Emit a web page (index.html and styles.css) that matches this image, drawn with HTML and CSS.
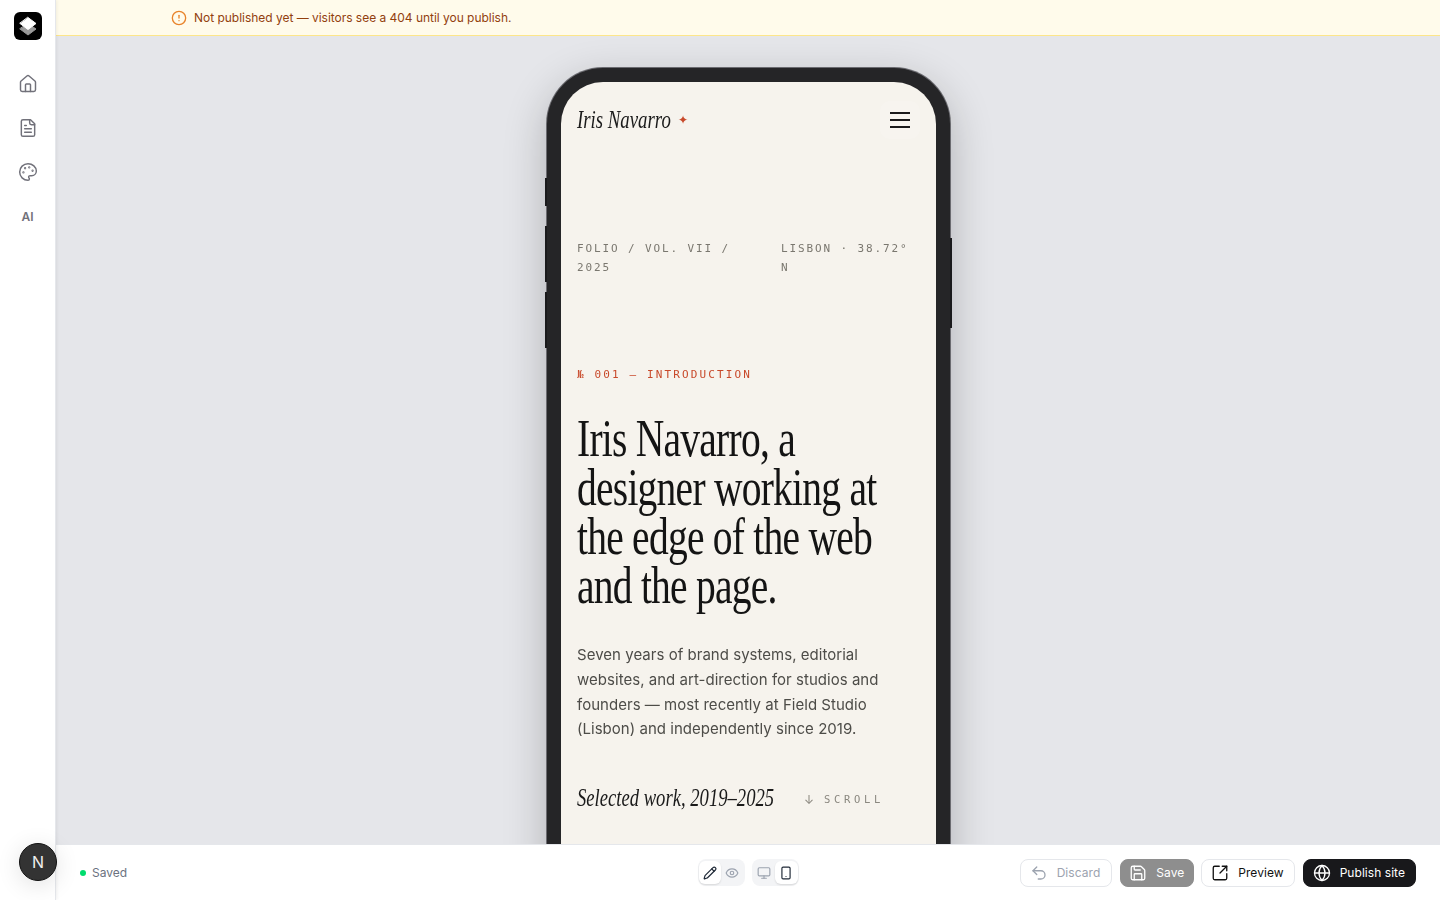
FILE: index.html
```html
<!DOCTYPE html>
<html lang="en">
<head>
    <meta charset="UTF-8">
    <meta name="viewport" content="width=device-width, initial-scale=1.0">
    <title>Site editor</title>
    <link rel="stylesheet" href="styles.css">
</head>
<body>

    <div class="app">
        <aside class="sidebar">
            <div class="logo">
                <svg viewBox="0 0 20 20" width="20" height="20">
                    <path d="M10 7.5 18 13l-8 6-8-6z" fill="#9a9a9a" stroke="#9a9a9a"/>
                    <path d="M10 1.5 18 7.5l-8 6-8-6z" fill="#fff" stroke="#fff"/>
                </svg>
            </div>
            <nav class="side-nav">
                <a class="side-link"><svg class="icon-20" viewBox="0 0 24 24"><path d="M15 21v-8a1 1 0 0 0-1-1h-4a1 1 0 0 0-1 1v8"/><path d="M3 10a2 2 0 0 1 .709-1.528l7-5.999a2 2 0 0 1 2.582 0l7 5.999A2 2 0 0 1 21 10v9a2 2 0 0 1-2 2H5a2 2 0 0 1-2-2z"/></svg></a>
                <a class="side-link"><svg class="icon-20" viewBox="0 0 24 24"><path d="M15 2H6a2 2 0 0 0-2 2v16a2 2 0 0 0 2 2h12a2 2 0 0 0 2-2V7Z"/><path d="M14 2v4a2 2 0 0 0 2 2h4"/><path d="M10 9H8"/><path d="M16 13H8"/><path d="M16 17H8"/></svg></a>
                <a class="side-link"><svg class="icon-20" viewBox="0 0 24 24"><circle cx="13.5" cy="6.5" r=".5"/><circle cx="17.5" cy="10.5" r=".5"/><circle cx="8.5" cy="7.5" r=".5"/><circle cx="6.5" cy="12.5" r=".5"/><path d="M12 2C6.5 2 2 6.5 2 12s4.5 10 10 10c.926 0 1.648-.746 1.648-1.688 0-.437-.18-.835-.437-1.125-.29-.289-.438-.652-.438-1.125a1.64 1.64 0 0 1 1.668-1.668h1.996c3.051 0 5.555-2.503 5.555-5.554C21.965 6.012 17.461 2 12 2z"/></svg></a>
                <a class="side-link side-text">AI</a>
            </nav>
            <div class="avatar">N</div>
        </aside>

        <main class="main">
            <div class="banner">
                <svg class="icon-16 banner-icon" viewBox="0 0 24 24"><circle cx="12" cy="12" r="10"/><line x1="12" x2="12" y1="8" y2="12"/><line x1="12" x2="12.01" y1="16" y2="16"/></svg>
                <span>Not published yet — visitors see a 404 until you publish.</span>
            </div>

            <div class="canvas">
                <div class="phone">
                    <span class="phone-btn btn-a"></span>
                    <span class="phone-btn btn-b"></span>
                    <span class="phone-btn btn-c"></span>
                    <span class="phone-btn btn-d"></span>
                    <div class="screen">
                        <header class="site-nav">
                            <div class="site-logo"><span class="logo-name">Iris Navarro</span><span class="star">✦</span></div>
                            <div class="burger"><i></i><i></i><i></i></div>
                        </header>
                        <div class="meta">
                            <span class="meta-left">FOLIO / VOL. VII / 2025</span>
                            <span class="meta-right">LISBON · 38.72° N</span>
                        </div>
                        <p class="eyebrow">№ 001 — INTRODUCTION</p>
                        <h1 class="headline">Iris Navarro, a<br>designer working at<br>the edge of the web<br>and the page.</h1>
                        <p class="intro">Seven years of brand systems, editorial websites, and art-direction for studios and founders — most recently at Field Studio (Lisbon) and independently since 2019.</p>
                        <div class="selected">
                            <div class="selected-wrap"><span class="selected-title">Selected work, 2019–2025</span></div>
                            <span class="scroll"><span class="arrow">↓</span>SCROLL</span>
                        </div>
                    </div>
                </div>
            </div>

            <footer class="bar">
                <div class="status"><span class="dot"></span>Saved</div>
                <div class="toggles">
                    <div class="toggle">
                        <button class="toggle-btn active"><svg class="icon-14" viewBox="0 0 24 24"><path d="M21.174 6.812a1 1 0 0 0-3.986-3.987L3.842 16.174a2 2 0 0 0-.5.83l-1.321 4.352a.5.5 0 0 0 .623.622l4.353-1.32a2 2 0 0 0 .83-.497z"/><path d="m15 5 4 4"/></svg></button>
                        <button class="toggle-btn"><svg class="icon-14" viewBox="0 0 24 24"><path d="M2 12s3-7 10-7 10 7 10 7-3 7-10 7-10-7-10-7Z"/><circle cx="12" cy="12" r="3"/></svg></button>
                    </div>
                    <div class="toggle">
                        <button class="toggle-btn"><svg class="icon-14" viewBox="0 0 24 24"><rect width="20" height="14" x="2" y="3" rx="2"/><line x1="8" x2="16" y1="21" y2="21"/><line x1="12" x2="12" y1="17" y2="21"/></svg></button>
                        <button class="toggle-btn active"><svg class="icon-14" viewBox="0 0 24 24"><rect width="14" height="20" x="5" y="2" rx="2" ry="2"/><path d="M12 18h.01"/></svg></button>
                    </div>
                </div>
                <div class="actions">
                    <button class="action discard"><svg class="icon-18" viewBox="0 0 24 24"><path d="M9 14 4 9l5-5"/><path d="M4 9h10.5a5.5 5.5 0 0 1 5.5 5.5a5.5 5.5 0 0 1-5.5 5.5H11"/></svg>Discard</button>
                    <button class="action save"><svg class="icon-18" viewBox="0 0 24 24"><path d="M15.2 3a2 2 0 0 1 1.4.6l3.8 3.8a2 2 0 0 1 .6 1.4V19a2 2 0 0 1-2 2H5a2 2 0 0 1-2-2V5a2 2 0 0 1 2-2z"/><path d="M17 21v-7a1 1 0 0 0-1-1H8a1 1 0 0 0-1 1v7"/><path d="M7 3v4a1 1 0 0 0 1 1h7"/></svg>Save</button>
                    <button class="action preview"><svg class="icon-18" viewBox="0 0 24 24"><path d="M21 13v6a2 2 0 0 1-2 2H5a2 2 0 0 1-2-2V5a2 2 0 0 1 2-2h6"/><path d="m21 3-9 9"/><path d="M15 3h6v6"/></svg>Preview</button>
                    <button class="action publish"><svg class="icon-18" viewBox="0 0 24 24"><circle cx="12" cy="12" r="10"/><path d="M12 2a14.5 14.5 0 0 0 0 20 14.5 14.5 0 0 0 0-20"/><path d="M2 12h20"/></svg>Publish site</button>
                </div>
            </footer>
        </main>
    </div>

</body>
</html>
```

FILE: styles.css
```css
* {
    margin: 0;
    padding: 0;
    box-sizing: border-box;
}

body {
    font-family: 'Inter', sans-serif;
    background: #fff;
    color: #111;
    height: 100vh;
    overflow: hidden;
}

svg {
    fill: none;
    stroke: currentColor;
    stroke-width: 2;
    stroke-linecap: round;
    stroke-linejoin: round;
    flex-shrink: 0;
}

.icon-20 {
    width: 20px;
    height: 20px;
}

.icon-18 {
    width: 18px;
    height: 18px;
}

.icon-16 {
    width: 16px;
    height: 16px;
}

.icon-14 {
    width: 14px;
    height: 14px;
}

.app {
    display: flex;
    height: 900px;
}

/* left rail */
.sidebar {
    width: 56px;
    flex-shrink: 0;
    position: relative;
    z-index: 2;
    background: #fff;
    border-right: 1px solid #e5e7eb;
    box-shadow: 1px 0 3px rgba(0, 0, 0, 0.06);
    display: flex;
    flex-direction: column;
    align-items: center;
    padding-top: 12px;
}

.logo {
    width: 28px;
    height: 28px;
    background: #000;
    border-radius: 6px;
    display: flex;
    align-items: center;
    justify-content: center;
}

.logo svg {
    stroke-width: 1;
}

.side-nav {
    margin-top: 26px;
    display: flex;
    flex-direction: column;
    gap: 8px;
}

.side-link {
    width: 36px;
    height: 36px;
    display: flex;
    align-items: center;
    justify-content: center;
    color: #71717a;
}

.side-link svg {
    stroke-width: 1.75;
}

.side-text {
    font-size: 12px;
    font-weight: 600;
}

.avatar {
    position: absolute;
    left: 19px;
    top: 843px;
    width: 38px;
    height: 38px;
    border-radius: 50%;
    background: #333;
    border: 1px solid #111;
    color: #eee;
    font-size: 16px;
    display: flex;
    align-items: center;
    justify-content: center;
    box-shadow: 0 4px 24px rgba(0, 0, 0, 0.12);
}

.main {
    flex: 1;
    min-width: 0;
    display: flex;
    flex-direction: column;
}

.banner {
    height: 36px;
    flex-shrink: 0;
    background: #fffbeb;
    border-bottom: 1px solid #fde68a;
    padding-left: 115px;
    display: flex;
    align-items: center;
    gap: 7px;
    font-size: 12px;
    letter-spacing: -0.025px;
    color: #92400e;
}

.banner-icon {
    color: #e8832a;
}

/* phone preview */
.canvas {
    flex: 1;
    min-height: 0;
    overflow: hidden;
    background: #e5e6ea;
    padding-top: 32px;
    display: flex;
    justify-content: center;
}

.phone {
    position: relative;
    width: 403px;
    height: 840px;
    flex-shrink: 0;
    background: #252527;
    border-radius: 56px;
    padding: 14px;
    box-shadow: 0 0 0 1px #6b6b70, 0 14px 44px rgba(0, 0, 0, 0.24);
}

.phone-btn {
    position: absolute;
    width: 2px;
    background: #1a1a1c;
}

.btn-a { left: -2px; top: 110px; height: 28px; }
.btn-b { left: -2px; top: 158px; height: 56px; }
.btn-c { left: -2px; top: 224px; height: 56px; }
.btn-d { right: -2px; top: 170px; height: 90px; }

.screen {
    height: 100%;
    background: #f6f3ed;
    border-radius: 42px;
    overflow: hidden;
    padding: 0 16px;
    will-change: transform;
}

.site-nav {
    height: 76px;
    display: flex;
    align-items: center;
    justify-content: space-between;
}

.site-logo {
    font-family: 'Liberation Serif', serif;
    font-style: italic;
    font-size: 25px;
    color: #1a1a1a;
    display: flex;
    align-items: center;
    white-space: nowrap;
    position: relative;
}

.logo-name {
    display: inline-block;
    transform: scaleX(0.752);
    transform-origin: left center;
}

.star {
    position: absolute;
    left: 101px;
    font-family: 'DejaVu Sans', sans-serif;
    font-style: normal;
    font-size: 12px;
    color: #c8492a;
}

.burger {
    width: 40px;
    height: 38px;
    border-radius: 10px;
    background: rgba(255, 255, 255, 0.15);
    display: flex;
    flex-direction: column;
    justify-content: center;
    align-items: center;
    gap: 5px;
}

.burger i {
    display: block;
    width: 20px;
    height: 2px;
    background: #1a1a1a;
}

.meta {
    margin-top: 81px;
    display: flex;
    justify-content: space-between;
    font-family: 'DejaVu Sans Mono', monospace;
    font-size: 11px;
    line-height: 19px;
    letter-spacing: 1.88px;
    color: #7a776f;
}

.meta-left {
    width: 180px;
}

.meta-right {
    width: 139px;
}

.eyebrow {
    margin-top: 90px;
    font-family: 'DejaVu Sans Mono', monospace;
    font-size: 11px;
    line-height: 16px;
    letter-spacing: 2.13px;
    color: #c8492a;
}

.headline {
    margin-top: 31px;
    width: 470px;
    font-family: 'Liberation Serif', serif;
    font-weight: 400;
    font-size: 52px;
    line-height: 49px;
    letter-spacing: -1px;
    color: #141414;
    transform: scaleX(0.76);
    transform-origin: left top;
}

.intro {
    margin-top: 33px;
    font-size: 15px;
    line-height: 24.75px;
    letter-spacing: 0.03px;
    color: #4d4c48;
}

.selected {
    margin-top: 40px;
    display: flex;
    align-items: center;
    height: 32px;
}

.selected-wrap {
    width: 227px;
    flex-shrink: 0;
}

.selected-title {
    display: inline-block;
    font-family: 'Liberation Serif', serif;
    font-style: italic;
    font-size: 25px;
    white-space: nowrap;
    color: #1a1a1a;
    transform: scaleX(0.745);
    transform-origin: left center;
}

.scroll {
    display: flex;
    align-items: center;
    padding-top: 2px;
    font-family: 'DejaVu Sans Mono', monospace;
    font-size: 10.5px;
    letter-spacing: 3.7px;
    white-space: nowrap;
    color: #8a877f;
}

.arrow {
    width: 20px;
    font-family: 'Inter', sans-serif;
    font-size: 12px;
    letter-spacing: 0;
}

/* bottom bar */
.bar {
    height: 56px;
    flex-shrink: 0;
    position: relative;
    background: #fff;
    border-top: 1px solid #e5e7eb;
    padding: 0 24px;
    display: grid;
    grid-template-columns: 1fr auto 1fr;
    align-items: center;
}

.status {
    display: flex;
    align-items: center;
    gap: 6px;
    font-size: 12px;
    color: #6b7280;
}

.dot {
    width: 6px;
    height: 6px;
    border-radius: 50%;
    background: #00dc6e;
}

.toggles {
    display: flex;
    gap: 7px;
}

.toggle {
    display: flex;
    height: 27px;
    padding: 2px 1px;
    background: #f3f4f6;
    border-radius: 8px;
}

.toggle-btn {
    width: 22.5px;
    height: 23px;
    border: none;
    border-radius: 6px;
    background: transparent;
    color: #9ca3af;
    display: flex;
    align-items: center;
    justify-content: center;
}

.toggle-btn.active {
    background: #fff;
    color: #1f2937;
    box-shadow: 0 1px 2px rgba(0, 0, 0, 0.12);
}

.actions {
    display: flex;
    justify-content: flex-end;
    gap: 8px;
}

.action {
    height: 28px;
    padding: 0 10px 0 9px;
    border: 1px solid #e5e7eb;
    border-radius: 8px;
    background: #fff;
    font-family: 'Inter', sans-serif;
    font-size: 12px;
    letter-spacing: 0.05px;
    display: flex;
    align-items: center;
    gap: 9px;
    color: #111;
}

.action svg {
    stroke-width: 1.75;
}

.action.discard {
    padding-right: 11px;
    color: #9ca3af;
}

.action.save {
    padding: 0 9px 0 8px;
    margin-right: -1px;
    background: #8e8e8e;
    border-color: #8e8e8e;
    color: #fff;
}

.action.publish {
    background: #18181b;
    border-color: #18181b;
    color: #fff;
}
```
